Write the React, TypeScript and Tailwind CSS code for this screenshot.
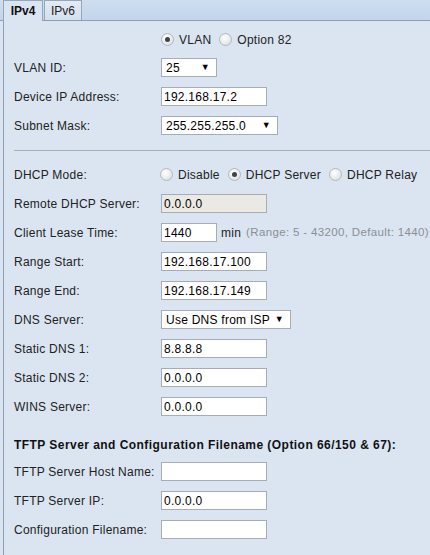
import React from "react";

function Radio({ checked }: { checked?: boolean }) {
  return (
    <span className="relative inline-flex h-[13px] w-[13px] shrink-0 items-center justify-center rounded-full border border-[#b4b8bd] bg-[radial-gradient(circle_at_40%_35%,#ffffff,#d6d9dd)]">
      {checked && <span className="h-[5px] w-[5px] rounded-full bg-[#3f4348]" />}
    </span>
  );
}

function Input({ value = "", width = "w-[106px]", disabled }: { value?: string; width?: string; disabled?: boolean }) {
  return (
    <input
      readOnly
      value={value}
      className={`h-[19px] ${width} border border-[#a6adb6] px-[2px] text-[12px] tracking-[0.25px] text-black outline-none ${
        disabled ? "bg-[#ebe9e4] text-[#333]" : "bg-white"
      }`}
    />
  );
}

function Select({ value, width }: { value: string; width: string }) {
  return (
    <div className={`flex h-[19px] ${width} items-center justify-between border border-[#a6adb6] bg-white pl-[4px] pr-[6px] text-[12px] text-black`}>
      <span>{value}</span>
      <span className="text-[9px]">▼</span>
    </div>
  );
}

function Row({ label, children }: { label: string; children: React.ReactNode }) {
  return (
    <div className="flex h-[29px] items-center">
      <div className="w-[147px] shrink-0 text-[#222]">{label}</div>
      <div className="flex items-center whitespace-nowrap">{children}</div>
    </div>
  );
}

export default function App() {
  return (
    <div className="h-[555px] w-[430px] overflow-hidden bg-[#dae5f1] font-['Liberation_Sans',Arial,sans-serif] text-[12px] tracking-[0.25px]">
      {/* tab strip */}
      <div className="flex h-[21px] items-end border-b border-[#8e9eb2] bg-[linear-gradient(#cddeef,#c3d5ea)] pl-[3px]">
        <div className="-mb-px flex h-[21px] w-[40px] items-center justify-center border-x border-t border-[#97a6b8] bg-[#dae5f1] font-bold tracking-normal text-[#111]">
          IPv4
        </div>
        <div className="ml-[1px] flex h-[20px] w-[38px] items-center justify-center border-x border-t border-[#97a6b8] bg-[linear-gradient(#e3ebf5,#d3e0ee)] tracking-normal text-[#222]">
          IPv6
        </div>
      </div>

      <div className="ml-[3px] h-full border-l border-[#8e9eb2] pl-[10px] pt-[5px]">
        <div className="flex h-[27px] items-center gap-[5px] pl-[147px] text-[#222]">
          <Radio checked />
          <span className="mr-[3px]">VLAN</span>
          <Radio />
          <span>Option 82</span>
        </div>
        <Row label="VLAN ID:">
          <Select value="25" width="w-[56px]" />
        </Row>
        <Row label="Device IP Address:">
          <Input value="192.168.17.2" />
        </Row>
        <Row label="Subnet Mask:">
          <Select value="255.255.255.0" width="w-[117px]" />
        </Row>

        <div className="mt-[10px] mb-[9px] border-t border-[#a3aebb]" />

        <Row label="DHCP Mode:">
          <span className="-ml-[1px] flex items-center gap-[5px] text-[#222]">
            <Radio />
            <span className="mr-[3px]">Disable</span>
            <Radio checked />
            <span className="mr-[3px]">DHCP Server</span>
            <Radio />
            <span>DHCP Relay</span>
          </span>
        </Row>
        <Row label="Remote DHCP Server:">
          <Input value="0.0.0.0" disabled />
        </Row>
        <Row label="Client Lease Time:">
          <Input value="1440" width="w-[56px]" />
          <span className="ml-[4px] text-[#222]">min</span>
          <span className="ml-[5px] text-[11.5px] tracking-[0.35px] text-[#8a8f96]">(Range: 5 - 43200, Default: 1440)</span>
        </Row>
        <Row label="Range Start:">
          <Input value="192.168.17.100" />
        </Row>
        <Row label="Range End:">
          <Input value="192.168.17.149" />
        </Row>
        <Row label="DNS Server:">
          <Select value="Use DNS from ISP" width="w-[130px]" />
        </Row>
        <Row label="Static DNS 1:">
          <Input value="8.8.8.8" />
        </Row>
        <Row label="Static DNS 2:">
          <Input value="0.0.0.0" />
        </Row>
        <Row label="WINS Server:">
          <Input value="0.0.0.0" />
        </Row>

        <div className="mt-[11px] flex h-[25px] items-center whitespace-nowrap font-bold tracking-[0.45px] text-[#111]">
          TFTP Server and Configuration Filename (Option 66/150 &amp; 67):
        </div>
        <Row label="TFTP Server Host Name:">
          <Input />
        </Row>
        <Row label="TFTP Server IP:">
          <Input value="0.0.0.0" />
        </Row>
        <Row label="Configuration Filename:">
          <Input />
        </Row>
      </div>
    </div>
  );
}
